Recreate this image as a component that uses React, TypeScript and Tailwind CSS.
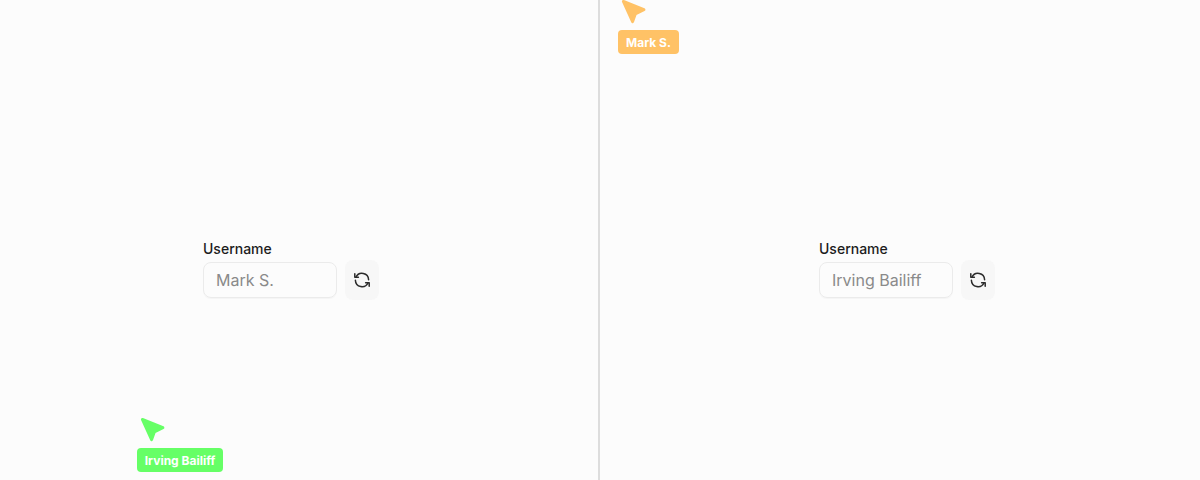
import React from "react";

function Cursor({ fill }: { fill: string }) {
  return (
    <svg width="26" height="26" viewBox="0 0 26 26" fill={fill} stroke={fill} strokeWidth="3" strokeLinejoin="round" strokeLinecap="round" className="block">
      <path d="M2.4 2.5 L11.6 22.6 L14.3 14.9 L22.9 10.7 Z" />
    </svg>
  );
}

function RefreshIcon() {
  return (
    <svg width="18" height="18" viewBox="0 0 18 18" fill="none" stroke="currentColor" strokeWidth="1.5" strokeLinecap="round" strokeLinejoin="round" className="block">
      <path d="M1.8 2.7v3.6h3.6" />
      <path d="M2.98 6.3A6.6 6.6 0 0 1 15.6 8.8" />
      <path d="M16.2 15.3v-3.6h-3.6" />
      <path d="M15.02 11.7A6.6 6.6 0 0 1 2.4 9.2" />
    </svg>
  );
}

function UsernameForm({ name }: { name: string }) {
  return (
    <div className="flex flex-col">
      <label className="mb-1 text-sm leading-[14px] font-medium text-[#1c1c1c]">Username</label>
      <div className="flex items-center gap-2">
        <div className="flex h-9 w-[134px] items-center rounded-lg border border-[#ebebeb] px-3 text-base text-[#8a8a8a] shadow-[0_1px_1px_rgba(0,0,0,0.03)]">{name}</div>
        <button className="flex h-10 w-[34px] items-center justify-center rounded-lg bg-[#f7f7f7] text-[#2b2b2b]">
          <RefreshIcon />
        </button>
      </div>
    </div>
  );
}

export default function App() {
  return (
    <div className="flex h-[480px] w-[1200px] overflow-hidden bg-[#fcfcfc] font-['Inter',sans-serif]">
      <div className="relative h-full w-[600px] border-r-2 border-[#dddddd]">
        <div className="pt-[242px] pl-[203px]">
          <UsernameForm name="Mark S." />
        </div>
        <div className="absolute top-[417px] left-[137px]">
          <div className="pl-[3px]"><Cursor fill="#66ff66" /></div>
          <div className="mt-[5px] flex h-6 w-[86px] items-center justify-center rounded bg-[#66ff66] pt-px text-xs font-bold text-white">Irving Bailiff</div>
        </div>
      </div>
      <div className="relative h-full w-[600px]">
        <div className="pt-[242px] pl-[219px]">
          <UsernameForm name="Irving Bailiff" />
        </div>
        <div className="absolute -top-px left-[18px]">
          <div className="pl-[3px]"><Cursor fill="#ffc266" /></div>
          <div className="mt-[5px] flex h-6 w-[61px] items-center justify-center rounded bg-[#ffc266] pt-px text-xs font-bold text-white">Mark S.</div>
        </div>
      </div>
    </div>
  );
}
